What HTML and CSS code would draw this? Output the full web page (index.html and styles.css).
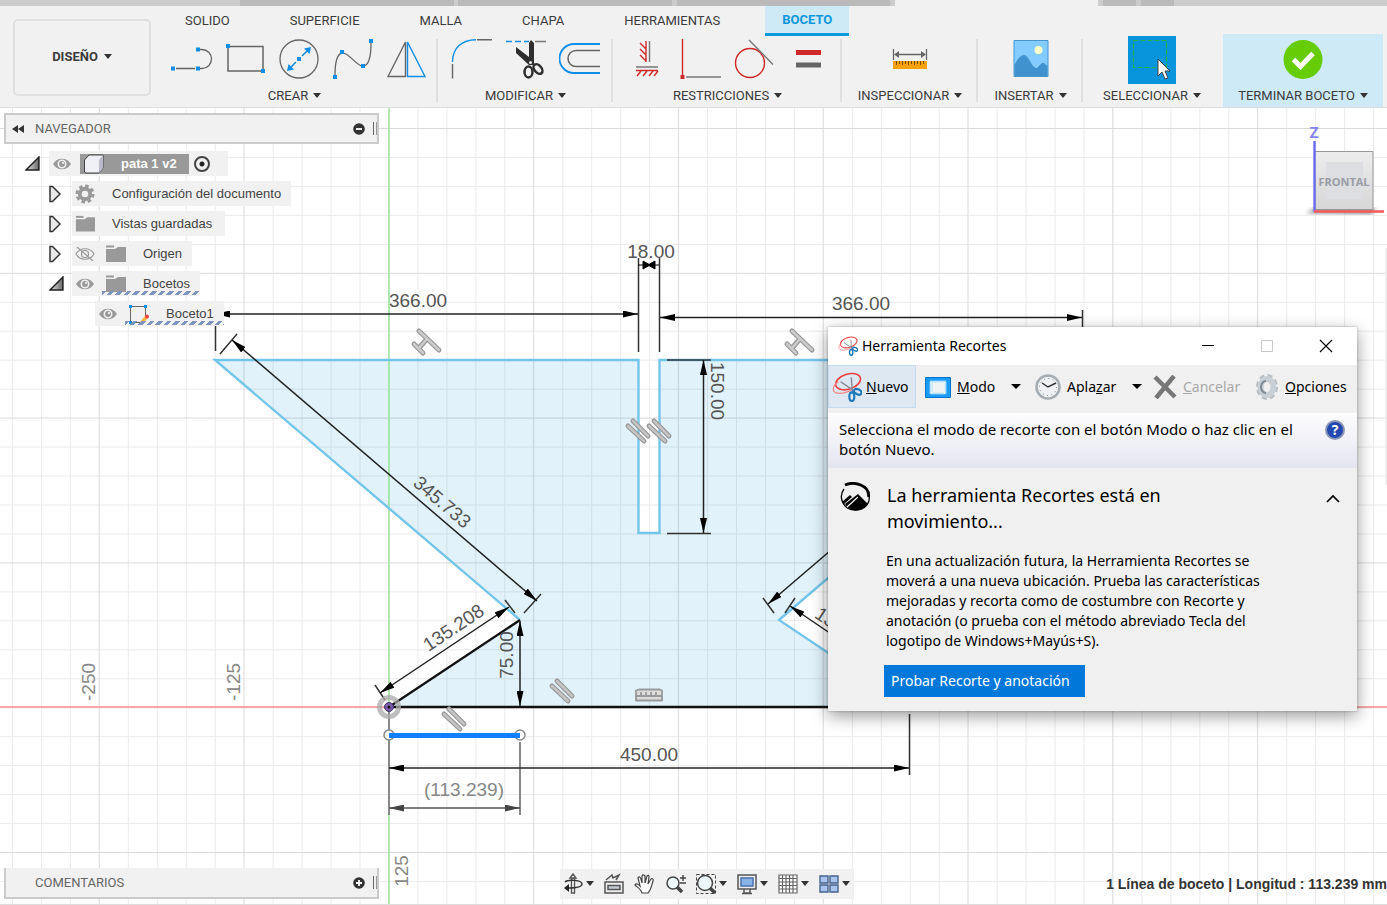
FILE: index.html
```html
<!DOCTYPE html>
<html lang="es">
<head>
<meta charset="utf-8">
<meta name="viewport" content="width=device-width, initial-scale=1">
<title>pata 1 v2</title>
<link rel="stylesheet" href="styles.css">
</head>
<body>
<div class="doc-tabs"></div>
<header class="ribbon">
  <button class="workspace-switch">DISEÑO <i class="caret"></i></button>
  <div class="ribbon-main">
    <nav class="tabs">
      <a href="#solido">SOLIDO</a>
      <a href="#superficie">SUPERFICIE</a>
      <a href="#malla">MALLA</a>
      <a href="#chapa">CHAPA</a>
      <a href="#herramientas">HERRAMIENTAS</a>
      <a href="#boceto" class="active" aria-current="page">BOCETO</a>
    </nav>
    <div class="groups">
      <section class="group create">
        <div class="tools">
          <button aria-label="Línea"><svg width="42" height="42" viewBox="0 0 42 42" fill="none" stroke="#666" stroke-width="1.3"><path d="M5 29.5h19M28 10.500h3a9.500 9.500 0 0 1 0 19h-3"/><g fill="#0f8ee9" stroke="none"><path d="M0 27.500h4v4h-4zM25 27.500h4v4h-4zM25 8.500h4v4h-4z"/></g></svg></button>
          <button aria-label="Rectángulo"><svg width="42" height="42" viewBox="0 0 42 42"><path d="M3 7.500h35v24.500h-35z" fill="none" stroke="#666" stroke-width="1.500"/><path d="M1 5h4v4h-4zM36 30h4v4h-4z" fill="#0f8ee9"/></svg></button>
          <button aria-label="Círculo"><svg width="42" height="42" viewBox="0 0 42 42"><circle cx="20" cy="20" r="19" fill="none" stroke="#666" stroke-width="1.300"/><path d="M11 29l6-6M23 17l6-6" stroke="#0f8ee9" stroke-width="1.500"/><path d="M18 18h4v4h-4zM32 8l-1.500 7-5.500-5.500zM8 32l1.500-7 5.500 5.500z" fill="#0f8ee9"/></svg></button>
          <button aria-label="Spline"><svg width="42" height="42" viewBox="0 0 42 42"><path d="M2 36C2 22 5 15 9 14c6-1 14 12 20 13 7 1 9-10 9-23" fill="none" stroke="#666" stroke-width="1.300"/><path d="M0 36h4v4H0zM7 11h4v4H7zM28 25h4v4h-4zM36 0h4v4h-4z" fill="#0f8ee9"/></svg></button>
          <button aria-label="Simetría"><svg width="42" height="42" viewBox="0 0 42 42" fill="none" stroke-width="1.400"><path d="M18.500 3v34.500H1z" stroke="#666"/><path d="M20.500 3v34.500H38z" stroke="#0f8ee9"/></svg></button>
        </div>
        <button class="menu">CREAR <i class="caret"></i></button>
      </section>
      <section class="group modify">
        <div class="tools">
          <button aria-label="Empalme"><svg width="42" height="42" viewBox="0 0 42 42" fill="none" stroke-width="1.400"><path d="M1.500 23C1.500 9 11 .7 25 .7" stroke="#0f8ee9"/><path d="M26 .7h15M1.500 25v14.500" stroke="#666"/></svg></button>
          <button aria-label="Recortar"><svg width="42" height="42" viewBox="0 0 42 42" fill="none"><path d="M1 2.500h23" stroke="#0f8ee9" stroke-width="1.500" stroke-dasharray="6 3"/><path d="M30 2.500h11" stroke="#777" stroke-width="1.500"/><path d="M11 8v6l13 12 5 0V4l-3-3-2 3v14z" fill="#2e2e2e"/><g stroke="#2e2e2e" stroke-width="2.500"><ellipse cx="23.500" cy="33" rx="4" ry="5.500"/><ellipse cx="33" cy="30" rx="3.500" ry="5.500" transform="rotate(-40 33 30)"/></g><circle cx="25.500" cy="23.500" r="1.500" fill="#eee"/></svg></button>
          <button aria-label="Desfase"><svg width="42" height="42" viewBox="0 0 42 42" fill="none" stroke-width="1.800"><path d="M41 5H15a14.500 14.500 0 0 0 0 29h26" stroke="#0f8ee9"/><path d="M41 11.500H17a8 8 0 0 0 0 16h24" stroke="#666" stroke-width="1.500"/></svg></button>
        </div>
        <button class="menu">MODIFICAR <i class="caret"></i></button>
      </section>
      <section class="group constrain">
        <div class="tools">
          <button aria-label="Horizontal/Vertical"><svg width="42" height="42" viewBox="0 0 42 42" fill="none" stroke-width="1.400"><path d="M20 2v21M14 4l6 6M14 10l6 6M14 16l6 6M10 31.500h22M15 32l-4 5M21 32l-4 5M27 32l-4 5M32 32l-4 5" stroke="#ce2828"/><path d="M23.500 2v21M10 28h22" stroke="#777"/></svg></button>
          <button aria-label="Perpendicular"><svg width="42" height="42" viewBox="0 0 42 42"><path d="M2.500 0v36" stroke="#ce2828" stroke-width="1.400"/><path d="M.5 36h4v4h-4z" fill="#ce2828"/><path d="M6 38h35" stroke="#777" stroke-width="1.400"/></svg></button>
          <button aria-label="Tangente"><svg width="42" height="42" viewBox="0 0 42 42" fill="none" stroke-width="1.400"><circle cx="16" cy="24" r="14.500" stroke="#ce2828"/><path d="M15 1l24 24.500" stroke="#777"/></svg></button>
          <button aria-label="Igual"><svg width="42" height="42" viewBox="0 0 42 42"><path d="M8 11h25v5H8z" fill="#ce2828"/><path d="M8 23.500h25v5H8z" fill="#666"/></svg></button>
        </div>
        <button class="menu">RESTRICCIONES <i class="caret"></i></button>
      </section>
      <section class="group inspect">
        <div class="tools">
          <button aria-label="Medir"><svg width="42" height="42" viewBox="0 0 42 42"><path d="M4.500 10v11M37.500 10v11M7 15.500h28" stroke="#666" stroke-width="1.300"/><path d="M5 15.500l5-3.500v7zM37 15.500l-5-3.500v7z" fill="#666"/><path d="M4 22h34v8H4z" fill="#f9a20a"/><path d="M7.500 22v4M10.500 22v3M13.500 22v4M16.500 22v3M19.500 22v4M22.500 22v3M25.500 22v4M28.500 22v3M31.500 22v4M34.500 22v3" stroke="#7a4a00"/></svg></button>
        </div>
        <button class="menu">INSPECCIONAR <i class="caret"></i></button>
      </section>
      <section class="group insert">
        <div class="tools">
          <button aria-label="Insertar imagen"><svg width="42" height="42" viewBox="0 0 42 42"><path d="M4 1.500h34v36H4z" fill="#83ccff" stroke="#4796cf"/><circle cx="28.500" cy="11" r="4" fill="#ffffc8"/><path d="M4.500 37V26c3-6 6-10 9.500-10 5 0 8 14 13 13 2-1 4-6 7-5l3.500 3v10z" fill="#3f92cd"/></svg></button>
        </div>
        <button class="menu">INSERTAR <i class="caret"></i></button>
      </section>
      <section class="group select">
        <div class="tools">
          <button aria-label="Seleccionar" class="select-tool"><svg width="46" height="48" viewBox="0 0 46 48"><path d="M4.500 4.500h33v27h-33z" fill="none" stroke="#22b14c" stroke-width="1.200" stroke-dasharray="5 2"/><path d="M29 23v17l4-4 3 7 3-1-3-7h5z" fill="#fff" stroke="#444"/></svg></button>
        </div>
        <button class="menu">SELECCIONAR <i class="caret"></i></button>
      </section>
      <section class="group finish">
        <div class="tools">
          <button aria-label="Terminar boceto"><svg width="42" height="42" viewBox="0 0 42 42"><circle cx="21" cy="20.500" r="19.500" fill="#66cc05"/><path d="M11.500 20.500l7 7L31 14.500" fill="none" stroke="#fff" stroke-width="5"/></svg></button>
        </div>
        <button class="menu">TERMINAR BOCETO <i class="caret"></i></button>
      </section>
    </div>
  </div>
</header>

<main class="workspace">
  <svg class="canvas" width="100%" height="100%" aria-label="Boceto1">
    <defs>
      <pattern id="minor" x="12" y="128" width="28.960" height="28.960" patternUnits="userSpaceOnUse"><path d="M.5 0v29M0 .5h29" stroke="#000" stroke-opacity=".08"/></pattern>
      <pattern id="major" x="98.500" y="128" width="144.800" height="144.800" patternUnits="userSpaceOnUse"><path d="M.5 0v145M0 .5h145" stroke="#000" stroke-opacity=".07"/></pattern>
      <marker id="arrow" viewBox="0 0 15 7" refX="15" refY="3.500" markerWidth="15" markerHeight="7" markerUnits="userSpaceOnUse" orient="auto-start-reverse"><path d="M0 0l15 3.500L0 7z"/></marker>
      <marker id="arrow-soft" viewBox="0 0 15 7" refX="15" refY="3.500" markerWidth="15" markerHeight="7" markerUnits="userSpaceOnUse" orient="auto-start-reverse"><path d="M0 0l15 3.500L0 7z" fill="#444"/></marker>
      <g id="parallel" stroke-linecap="round"><path d="M-10 -5L6 10M-5 -10L10 5" stroke="#999" stroke-width="5"/><path d="M-10 -5L6 10M-5 -10L10 5" stroke="#c4c4c4" stroke-width="2.500"/></g>
      <g id="perpendicular" stroke-linecap="round"><path d="M-7 -10L13 9M-12 3L-3 12M-7 7l7-8" stroke="#999" stroke-width="5"/><path d="M-7 -10L13 9M-12 3L-3 12M-7 7l7-8" stroke="#ccc" stroke-width="2.500"/></g>
    </defs>
    <g transform="translate(0 -108)">
      <path class="face" d="M215 360H638.500V533H659.500V360H1083L779 620 909 707H389L520 620z"/>
      <rect y="108" width="100%" height="100%" fill="url(#minor)"/>
      <rect y="108" width="100%" height="100%" fill="url(#major)"/>
      <path d="M1386 248v237" stroke="#eee" stroke-width="2"/>
      <path d="M389 108V2000" stroke="#9be79b" stroke-width="1.500"/>
      <path d="M0 707H4000" stroke="#f58f8f" stroke-width="1.500"/>
      <path class="profile" d="M520 620L215 360H638.500V533H659.500V360H1083L779 620 909 707"/>
      <path d="M909 707H389L520 620" fill="none" stroke="#111" stroke-width="2.400"/>
      <g class="extension">
        <path d="M215.500 314V351M638.500 258V352M659.500 258V352M1082.500 310V330M667 360H711M667 533.500H711M909.500 714V775"/>
        <path d="M220 354L237 334M524 613L541 594M375 685L385 700M505 600L515 613M763 598L774 613M785 613L795 598"/>
      </g>
      <path d="M389 707V815M520 742V815" stroke="#888" stroke-width="2"/>
      <g class="dimension">
        <path d="M215 314H638"/><path d="M660 317.500H1082"/>
        <path d="M703.500 360V533"/><path d="M520 621V706"/>
        <path d="M232 340L537 601"/><path d="M380 693L509 607"/><path d="M389 768H909"/>
        <path d="M768 604L1073 343"/><path d="M790 606L918 693"/>
      </g>
      <path d="M638 265h21M643 261l7 4-7 4zM655 261l-7 4 7 4z" stroke="#000"/>
      <path d="M389 808H520" stroke="#555" stroke-width="1.500" marker-start="url(#arrow-soft)" marker-end="url(#arrow-soft)"/>
      <g class="labels">
        <text x="418" y="307">366.00</text>
        <text x="861" y="310">366.00</text>
        <text x="651" y="258">18.00</text>
        <text x="649" y="761">450.00</text>
        <text x="464" y="796" fill="#888">(113.239)</text>
        <text transform="translate(711 391) rotate(90)">150.00</text>
        <text transform="translate(513 655) rotate(-90)">75.00</text>
        <text transform="translate(438 507) rotate(40.500)">345.733</text>
        <text transform="translate(457 633) rotate(-33.700)">135.208</text>
        <text transform="translate(842 636) rotate(33.700)">135.208</text>
        <text transform="translate(95 682) rotate(-90)" fill="#888">-250</text>
        <text transform="translate(240 682) rotate(-90)" fill="#888">-125</text>
        <text transform="translate(408 871) rotate(-90)" fill="#888">125</text>
      </g>
      <use href="#parallel" x="562" y="691"/><use href="#parallel" x="454" y="719"/>
      <use href="#parallel" x="638" y="431"/><use href="#parallel" x="659" y="431"/>
      <use href="#perpendicular" x="426" y="341"/><use href="#perpendicular" x="799" y="341"/>
      <path d="M636 700.500v-10l3-1h21l2 1v10zM636 696h26M641 695v-3M646 695v-3M651 695v-3M656 695v-3" fill="#ddd" stroke="#999" stroke-width="1.800" stroke-linejoin="round"/>
      <circle cx="389" cy="707" r="9.500" fill="none" stroke="#aaa" stroke-opacity=".75" stroke-width="5"/>
      <circle cx="389" cy="707" r="4.500" fill="#7a5ca8" stroke="#3d3060"/><circle cx="389" cy="707" r="1.500"/>
      <g fill="#fff" stroke="#888" stroke-width="1.500"><circle cx="389" cy="735" r="5"/><circle cx="520" cy="735" r="5"/></g>
      <path d="M389 735.500H520" stroke="#0f80ff" stroke-width="5"/>
    </g>
  </svg>

  <svg class="viewcube" width="96" height="100" viewBox="1291 120 96 100" aria-label="Vista frontal">
    <defs>
      <linearGradient id="cube" x2="0" y2="1"><stop stop-color="#ededed"/><stop offset="1" stop-color="#d6d6d6"/></linearGradient>
      <filter id="soft"><feGaussianBlur stdDeviation="2"/></filter>
    </defs>
    <path d="M1306 213l10-5h60l-4 6z" fill="#888" filter="url(#soft)"/>
    <path d="M1315 151.500h58v58h-58z" fill="url(#cube)" stroke="#999"/>
    <path d="M1326 162h37v37h-37z" fill="#dcdee2"/>
    <path d="M1314.500 141v71" stroke="#6b6bf0" stroke-width="2.400"/>
    <path d="M1314 211.500h70" stroke="#f05a5a" stroke-width="2.400"/>
    <text x="1314" y="138" class="axis-name">Z</text>
    <text x="1344" y="186" class="face-name">FRONTAL</text>
  </svg>

  <aside class="browser">
    <div class="panel-bar">
      <svg width="14" height="10" viewBox="0 0 14 10"><path d="M7 1v8L1 5zM13 1v8L7 5z" fill="#333"/></svg>
      <span>NAVEGADOR</span>
      <button aria-label="Contraer"><svg width="12" height="12" viewBox="0 0 12 12"><circle cx="6" cy="6" r="5.800" fill="#333"/><path d="M3 6h6" stroke="#fff" stroke-width="1.800"/></svg></button>
      <i class="grip"></i>
    </div>
    <svg class="symbols" width="0" height="0">
      <defs>
        <linearGradient id="tri"><stop stop-color="#eee"/><stop offset="1" stop-color="#666"/></linearGradient>
        <symbol id="open" viewBox="0 0 14 14"><path d="M13 1v12H1z" fill="url(#tri)" stroke="#222" stroke-width="1.400"/></symbol>
        <symbol id="closed" viewBox="0 0 12 18"><path d="M1 1.500h2.500L11 9l-7.500 7.500H1z" fill="#e8e8e8" stroke="#333" stroke-width="1.500"/></symbol>
        <symbol id="eye" viewBox="0 0 20 14"><path d="M1 7C5 0 15 0 19 7 15 14 5 14 1 7z" fill="#999"/><circle cx="10" cy="7" r="3.700" fill="#999" stroke="#f0f0f0" stroke-width="1.600"/><circle cx="11" cy="6" r="1" fill="#fff"/></symbol>
        <symbol id="folder" viewBox="0 0 21 18"><path d="M1 4h9l3-2h8v15H1z" fill="#999"/><path d="M1 1.500h8" stroke="#999" stroke-width="2"/></symbol>
      </defs>
    </svg>
    <div class="tree">
      <div class="row root">
        <button class="twist" aria-label="Contraer pata 1 v2"><svg width="15" height="15"><use href="#open"/></svg></button>
        <div class="node"><svg width="20" height="14"><use href="#eye"/></svg>
          <span class="current"><svg width="22" height="20" viewBox="0 0 22 20"><path d="M1.500 6L6 1h14v13l-4 5H3l-1.500-1z" fill="#eef0f5" stroke="#444"/><path d="M16 6l4-5v13l-4 5z" fill="#bbc"/></svg><b>pata 1 v2</b></span>
          <input type="radio" checked aria-label="Activar componente"></div>
      </div>
      <div class="row">
        <button class="twist" aria-label="Expandir configuración"><svg width="12" height="18"><use href="#closed"/></svg></button>
        <div class="node"><svg width="20" height="20" viewBox="0 0 21 21"><circle cx="10.500" cy="10.500" r="8.500" fill="none" stroke="#999" stroke-width="3" stroke-dasharray="3.700 2.970"/><circle cx="10.500" cy="10.500" r="5.500" fill="none" stroke="#999" stroke-width="4"/></svg><span>Configuración del documento</span></div>
      </div>
      <div class="row">
        <button class="twist" aria-label="Expandir vistas"><svg width="12" height="18"><use href="#closed"/></svg></button>
        <div class="node pad"><svg width="20" height="18"><use href="#folder"/></svg><span>Vistas guardadas</span></div>
      </div>
      <div class="row">
        <button class="twist" aria-label="Expandir origen"><svg width="12" height="18"><use href="#closed"/></svg></button>
        <div class="node"><svg width="20" height="14" viewBox="0 0 20 14" fill="none" stroke="#999" stroke-width="1.200"><path d="M1 7C5 0 15 0 19 7 15 14 5 14 1 7zM2 0l16 14"/><circle cx="10" cy="7" r="3.500"/></svg><svg class="second" width="21" height="18"><use href="#folder"/></svg><span>Origen</span></div>
      </div>
      <div class="row">
        <button class="twist" aria-label="Contraer bocetos"><svg width="15" height="15"><use href="#open"/></svg></button>
        <div class="node hatched"><svg width="20" height="14"><use href="#eye"/></svg><svg class="second" width="21" height="18"><use href="#folder"/></svg><span>Bocetos</span></div>
      </div>
      <div class="row leaf">
        <div class="node hatched"><svg width="20" height="14"><use href="#eye"/></svg><svg class="second" width="21" height="20" viewBox="0 0 21 20"><path d="M3 2.500h15M2.500 3v14M17.500 3v9M3 18.500h10" stroke="#666" fill="none"/><path d="M1 1h3v3H1zM16 1h3v3h-3zM1 17h3v3H1z" fill="#0f8ee9"/><path d="M12 18l5-6 3 2-5 5z" fill="#f5b83c"/><circle cx="19" cy="12.500" r="2" fill="#f04040"/></svg><span>Boceto1</span></div>
      </div>
    </div>
  </aside>

  <footer class="bottom">
    <div class="panel-bar comments">
      <span>COMENTARIOS</span>
      <button aria-label="Expandir"><svg width="12" height="12" viewBox="0 0 12 12"><circle cx="6" cy="6" r="5.800" fill="#333"/><path d="M3 6h6M6 3v6" stroke="#fff" stroke-width="1.800"/></svg></button>
      <i class="grip"></i>
    </div>
    <div class="nav-tools">
      <button aria-label="Órbita"><svg width="22" height="22" viewBox="0 0 22 22" fill="none" stroke="#333" stroke-width="1.400"><path d="M9.500 20V5h3v15z" fill="#fff" stroke="#555"/><path d="M8 5l3-4 3 4z" fill="#fff" stroke="#555"/><path d="M3 9c3-3 17-2 17 2 0 3-6 4-14 4"/><path d="M7 11v8l-5-4z" fill="#222" stroke="none"/></svg><i class="caret"></i></button>
      <button aria-label="Mirar a"><svg width="22" height="22" viewBox="0 0 22 22" fill="#eee" stroke="#555" stroke-width="1.500"><path d="M2 9h18v11H2zM3 7L9 2l1 3 6-3-3 5"/><path d="M5 12.500h12v4H5z" fill="#c4cad4"/></svg></button>
      <button aria-label="Encuadre"><svg width="22" height="22" viewBox="0 0 22 22" fill="#fff" stroke="#444" stroke-width="1.200"><path d="M8 20c-1-4-5-6-7-8 1-2 3-1 5 1L4 5c1-2 2-1 3 1l1 4V3c1-2 2-1 3 0v7l2-7c1-1 2-1 2 1l-1 7 3-5c1-1 3 0 2 2-1 3-2 9-5 12z"/></svg></button>
      <button aria-label="Zoom"><svg width="22" height="22" viewBox="0 0 22 22" fill="none" stroke="#444"><circle cx="8" cy="10" r="6" fill="#edf6f8" stroke-width="1.500"/><path d="M12 14l5 5" stroke-width="3.500"/><path d="M15 5h6M18 2v6M15 10h6" stroke-width="1.400"/></svg></button>
      <button aria-label="Ajustar"><svg width="22" height="22" viewBox="0 0 22 22" fill="none" stroke="#444"><path d="M1.500 1.500h19v19h-19z" stroke-dasharray="3 2"/><circle cx="10" cy="10" r="7.500" fill="#edf6f8" stroke-width="1.500"/><path d="M15 15l5 5" stroke-width="3.500"/></svg><i class="caret"></i></button>
      <button aria-label="Visualización"><svg width="22" height="22" viewBox="0 0 22 22" fill="#eee" stroke="#555" stroke-width="1.500"><path d="M2 2h18v14H2zM8 16h6v4H8zM6 20.500h10"/><path d="M5 5h12v8H5z" fill="#8ab4e8" stroke="#4772aa"/></svg><i class="caret"></i></button>
      <button aria-label="Rejilla"><svg width="22" height="22" viewBox="0 0 22 22" fill="#fff" stroke="#666" stroke-width="1.200"><path d="M2 2h18v18H2zM5.500 2v18M9 2v18M12.500 2v18M16 2v18M2 5.500h18M2 9h18M2 12.500h18M2 16h18"/></svg><i class="caret"></i></button>
      <button aria-label="Ventanas"><svg width="22" height="22" viewBox="0 0 22 22" fill="#a9c5ee" stroke="#46618c" stroke-width="1.400"><path d="M2 3h8v7H2zM12 3h8v7h-8zM2 12h8v7H2zM12 12h8v7h-8z"/></svg><i class="caret"></i></button>
    </div>
    <output class="status">1 Línea de boceto | Longitud : 113.239 mm</output>
  </footer>

  <section class="dialog" role="dialog" aria-labelledby="snip-title">
    <svg class="symbols" width="0" height="0"><symbol id="snip" viewBox="0 0 28 28"><g fill="none"><ellipse cx="15" cy="9" rx="12" ry="7" transform="rotate(-18 15 9)" stroke="#ea4040" stroke-width="1.500"/><path d="M6 9C-1 14 0 20 7 20c5 0 9-2 12-4" stroke="#f28a8a" stroke-width="1.200"/><path d="M8 9l13 9M18 5l1 14" stroke="#889" stroke-width="1.300"/><g stroke="#1d78b8" stroke-width="2"><ellipse cx="18.500" cy="23" rx="2.300" ry="4"/><ellipse cx="24" cy="18.500" rx="3.700" ry="2.300" transform="rotate(25 24 18.500)"/></g></g></symbol></svg>
    <div class="titlebar">
      <svg width="20" height="20"><use href="#snip"/></svg>
      <h1 id="snip-title">Herramienta Recortes</h1>
      <div class="window-buttons">
        <button aria-label="Minimizar"><svg width="14" height="14"><path d="M1 6.500h12" stroke="#000"/></svg></button>
        <button aria-label="Maximizar" disabled><svg width="14" height="14"><path d="M1.500 1.500h11v11h-11z" fill="none" stroke="#c8c8c8"/></svg></button>
        <button aria-label="Cerrar"><svg width="14" height="14"><path d="M1 1l12 12M13 1L1 13" stroke="#000" stroke-width="1.200"/></svg></button>
      </div>
    </div>
    <div class="snip-tools">
      <button class="new"><svg width="30" height="30"><use href="#snip"/></svg><span><u>N</u>uevo</span></button>
      <button class="mode"><svg width="26" height="22" viewBox="0 0 26 22"><path d="M.5 1.500h25v20H.5z" fill="#1a9cf5" stroke="#0873ca"/><path d="M5.500 5.500h15v12h-15z" fill="#cde8f5" stroke="#fff" stroke-width="2" stroke-dasharray="1 1"/><path d="M8 7h11v9H8z" fill="#f0f3f4"/></svg><span><u>M</u>odo</span><i class="caret"></i></button>
      <button class="delay"><svg width="26" height="26" viewBox="0 0 26 26" fill="none"><circle cx="13" cy="13" r="11.500" fill="#eef2f4" stroke="#a5adb3" stroke-width="2.500"/><circle cx="13" cy="13" r="8.500" stroke="#777" stroke-dasharray="1 3.450"/><path d="M7 9l6 4 8-4" stroke="#333" stroke-width="1.400"/></svg><span>Apla<u>z</u>ar</span><i class="caret"></i></button>
      <button class="cancel" disabled><svg width="24" height="24" viewBox="0 0 24 24"><path d="M2 2l20 20M21 1L3 23" stroke="#777" stroke-width="4.500"/></svg><span><u>C</u>ancelar</span></button>
      <button class="options"><svg width="24" height="28" viewBox="0 0 24 28"><g fill="none" stroke="#b6bfc5"><ellipse cx="12" cy="14" rx="9.500" ry="11.500" stroke-width="3" stroke-dasharray="5 3.300"/><ellipse cx="12" cy="14" rx="6.500" ry="8" stroke="#c9d0d5" stroke-width="6"/></g><path d="M11 8a5 6 0 0 0 0 12" fill="none" stroke="#7f8c96" stroke-width="2"/></svg><span><u>O</u>pciones</span></button>
    </div>
    <div class="hint">
      <p>Selecciona el modo de recorte con el botón Modo o haz clic en el botón Nuevo.</p>
      <button aria-label="Ayuda" class="help">?</button>
    </div>
    <div class="notice">
      <svg width="32" height="30" viewBox="0 0 32 30"><path d="M5 3C14-1 30 3 28.500 15" fill="none" stroke="#000" stroke-width="2.800"/><path d="M4 7C-2 15 3 28 15 28s16-9 13.500-16" fill="none" stroke="#000" stroke-width="1.300"/><path d="M5 22l13-10 10 10c-5 8-18 9-23 0zM2 20l8-7 2 2-8 7z"/><path d="M7 25L18 15" stroke="#fff" stroke-width="1.200"/></svg>
      <div class="notice-text">
        <h2>La herramienta Recortes está en movimiento...</h2>
        <p>En una actualización futura, la Herramienta Recortes se moverá a una nueva ubicación. Prueba las características mejoradas y recorta como de costumbre con Recorte y anotación (o prueba con el método abreviado Tecla del logotipo de Windows+Mayús+S).</p>
        <button class="primary">Probar Recorte y anotación</button>
      </div>
      <button class="collapse" aria-label="Contraer aviso"><svg width="14" height="10"><path d="M1 8l6-6 6 6" fill="none" stroke="#000" stroke-width="1.700"/></svg></button>
    </div>
  </section>
</main>
</body>
</html>
```
FILE: styles.css
```css
* { box-sizing: border-box; }
body {
  margin: 0;
  min-height: 100vh;
  display: flex;
  flex-direction: column;
  overflow: hidden;
  font-family: Roboto, "Liberation Sans", sans-serif;
  font-size: 13px;
  color: #3c3c3c;
  background: #fff;
}
button {
  display: inline-flex;
  align-items: center;
  padding: 0;
  border: 0;
  background: none;
  color: inherit;
  font: inherit;
}
h1, h2, p { margin: 0; font-weight: 400; }
svg { display: block; flex: none; }
.symbols { position: absolute; }
.caret {
  border: 4px solid transparent;
  border-top: 5px solid #333;
  border-bottom: 0;
}

/* Ribbon */
.doc-tabs {
  height: 6px;
  background: linear-gradient(90deg,
    #ccc 240px, #bababa 240px 454px, #ccc 454px 458px, #bababa 458px 672px,
    #ccc 672px 677px, #bababa 677px 890px, #ccc 890px 895px, #f1f1f1 895px 1098px,
    #ccc 1098px 1103px, #bababa 1103px 1136px, #ccc 1136px 1141px, #bababa 1141px 1174px, #ccc 1174px);
}
.ribbon {
  display: flex;
  height: 102px;
  background: #f1f1f1;
  border-bottom: 1px solid #dcdcdc;
}
.workspace-switch {
  width: 138px;
  height: 77px;
  margin: 13px 0 0 13px;
  padding-bottom: 2px;
  justify-content: center;
  gap: 6px;
  border: 2px solid #dfdfdf;
  border-radius: 5px;
  font-weight: 700;
}
.ribbon-main { flex: 1; }
.tabs {
  display: flex;
  height: 30px;
  gap: 60px;
  padding-left: 34px;
}
.tabs a {
  display: flex;
  align-items: center;
  padding-bottom: 2px;
  color: inherit;
  text-decoration: none;
}
.tabs .active {
  margin-left: -15px;
  padding: 0 17px;
  color: #0f97dc;
  background: #cdeaf6;
  border-bottom: 3px solid #0f97dc;
  font-weight: 700;
}
.groups { display: flex; height: 71px; }
.group {
  display: flex;
  flex-direction: column;
  align-items: center;
  background: linear-gradient(#e0e0e0, #e0e0e0) right 3px / 2px 63px no-repeat;
}
.create { width: 287px; }
.modify { width: 175px; }
.constrain { width: 229px; }
.inspect { width: 136px; }
.insert { width: 105px; }
.select { width: 138px; background: none; }
.finish {
  width: 160px;
  margin: -2px 0 0 2px;
  padding-top: 2px;
  background: #cdeaf6;
}
.tools { display: flex; align-items: center; gap: 12px; height: 48px; }
.create .tools { padding-left: 10px; }
.select-tool { padding: 0 1px; background: #0895db; }
.menu { gap: 5px; height: 24px; white-space: nowrap; }

/* Workspace */
.workspace {
  position: relative;
  flex: 1;
  display: flex;
  flex-direction: column;
  justify-content: space-between;
  padding: 5px 0 5px 4px;
  border-bottom: 1px solid #ddd;
}
.canvas { position: absolute; inset: 0; }
.viewcube { position: absolute; right: 0; top: 12px; }
.axis-name { font: 700 15px Roboto, sans-serif; fill: #8585ee; text-anchor: middle; }
.face-name { font: 700 11px "Open Sans", sans-serif; fill: #999da4; text-anchor: middle; }
.face { fill: #e1f2fb; }
.profile { fill: none; stroke: #74c5ea; stroke-width: 2.4px; }
.extension { fill: none; stroke: #333; stroke-width: 1.5px; }
.dimension path { fill: none; stroke: #222; stroke-width: 1.5px; marker-start: url(#arrow); marker-end: url(#arrow); }
.labels { font: 19px "Liberation Sans", Arial, sans-serif; fill: #555; text-anchor: middle; }
.browser, .bottom { position: relative; }
.panel-bar {
  display: flex;
  align-items: center;
  width: 375px;
  height: 31px;
  padding-left: 5px;
  background: #f1f1f1;
  border: 2px solid #cbcbcb;
  color: #666;
}
.panel-bar span { flex: 1; margin-left: 10px; }
.comments { border-top: 0; }
.comments span { margin-left: 24px; }
.grip {
  width: 4px;
  height: 13px;
  margin-left: 8px;
  border-left: 1px solid #666;
  border-right: 1px solid #999;
}
.tree { margin-top: 7px; color: #444; font-family: "Liberation Sans", Arial, sans-serif; }
.row { display: flex; align-items: center; height: 25px; margin: 0 0 5px 45px; }
.row.root { margin-left: 21px; }
.row.leaf { margin-left: 91px; }
.twist { width: 23px; }
.root .twist { width: 24px; }
.node { position: relative; display: flex; align-items: center; height: 25px; padding: 0 10px 0 3px; background: #f1f1f1; }
.node.pad { padding-right: 13px; }
.node > span { margin-left: 17px; }
.node .second { margin-left: 10px; }
.node > .current {
  display: flex;
  align-items: center;
  gap: 16px;
  height: 20px;
  margin-left: 8px;
  padding: 0 12px 0 3px;
  background: #999;
  color: #fff;
}
.node input {
  appearance: none;
  width: 16px;
  height: 16px;
  margin: 0 8px 0 5px;
  border: 2px solid #444;
  border-radius: 50%;
  background: radial-gradient(#222 2px, transparent 3px);
}
.hatched::after {
  content: "";
  position: absolute;
  left: 30px;
  right: 0;
  bottom: 1px;
  height: 4px;
  background: repeating-linear-gradient(135deg, #7f95bd 0 3px, transparent 3px 6px);
}
.bottom {
  display: grid;
  grid-template-columns: 556px auto 1fr;
  align-items: center;
}
.nav-tools {
  display: flex;
  align-items: center;
  justify-content: space-between;
  width: 294px;
  height: 30px;
  padding: 0 4px 0 2px;
  background: #f1f1f1;
}
.nav-tools .caret { margin-left: 2px; }
.status {
  margin-left: auto;
  white-space: nowrap;
  font: 700 14px "Liberation Sans", Arial, sans-serif;
  color: #333;
}

/* Snipping window */
.dialog {
  position: absolute;
  left: 828px;
  top: 219px;
  width: 529px;
  background: #f0f0f0;
  color: #000;
  font: 14px/20px "Noto Sans", sans-serif;
  box-shadow: 0 5px 16px rgba(0, 0, 0, .4), 0 0 2px rgba(0, 0, 0, .3);
}
.titlebar { display: flex; align-items: center; height: 38px; padding-left: 10px; background: #fff; }
.titlebar h1 { flex: 1; margin-left: 4px; font-size: 14px; }
.window-buttons { display: flex; gap: 45px; padding-right: 24px; }
.snip-tools { display: flex; height: 48px; padding-bottom: 5px; }
.snip-tools button { gap: 6px; }
.snip-tools .caret { margin-left: 10px; border-width: 5px 5px 0; border-top-color: #000; }
.snip-tools .new { width: 88px; padding-left: 3px; gap: 4px; background: #dde8f3; border: 1px solid #c5dcf0; }
.mode { width: 119px; padding-left: 9px; }
.delay { width: 118px; }
.cancel { width: 102px; }
.snip-tools .cancel { color: #a8a8a8; }
.hint {
  display: flex;
  justify-content: space-between;
  align-items: flex-start;
  height: 55px;
  padding: 6px 12px 0 11px;
  background: linear-gradient(#fdfdfe, #e5e5f1);
}
.hint p { width: 460px; font-size: 15px; }
.help {
  justify-content: center;
  width: 20px;
  height: 20px;
  margin-top: 1px;
  border: 2px solid #8e98b5;
  border-radius: 50%;
  background: #2448b0;
  color: #fff;
  font-weight: 700;
}
.notice { display: flex; align-items: flex-start; padding: 14px 17px 14px 12px; }
.notice-text { flex: 1; padding-left: 12px; }
.notice h2 { width: 320px; padding-left: 3px; font-size: 18px; line-height: 26px; }
.notice p { width: 390px; margin: 17px 0 14px 2px; }
.primary { height: 32px; padding: 0 15px 0 7px; background: #0078d9; color: #fff; }
.collapse { margin-top: 12px; }
```
